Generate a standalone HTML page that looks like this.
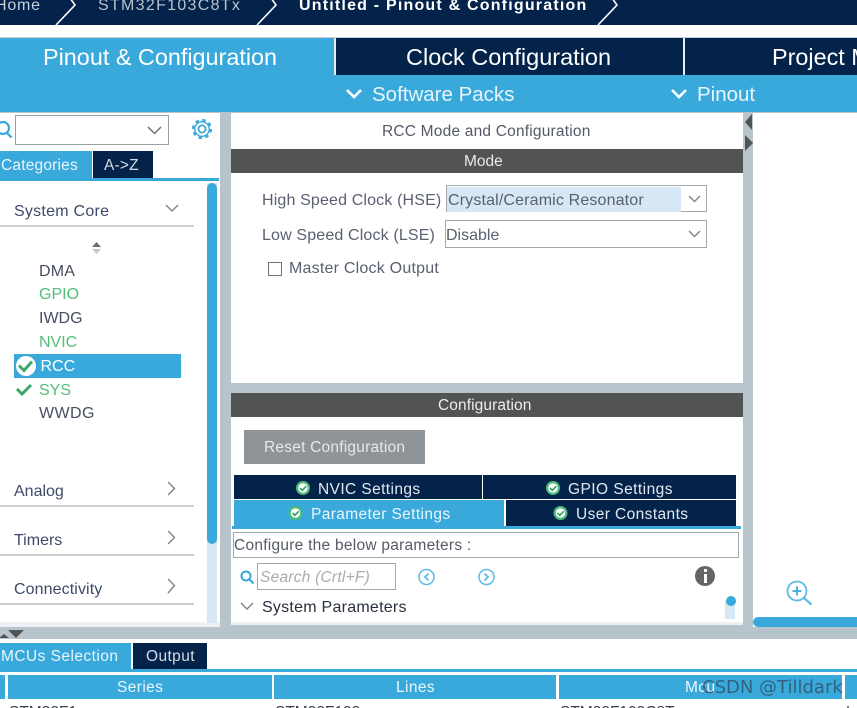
<!DOCTYPE html>
<html><head><meta charset="utf-8"><style>
html,body{margin:0;padding:0;background:#fff}
#p{position:relative;width:857px;height:708px;overflow:hidden;background:#fff;font-family:"Liberation Sans",sans-serif;filter:blur(.3px)}
.b{position:absolute}
.t{position:absolute;white-space:nowrap;line-height:1;margin-top:1px}
svg{position:absolute;overflow:visible}
</style></head><body><div id="p">
<!-- top bar -->
<div class="b" style="left:0;top:0;width:857px;height:25px;background:#03234b"></div>
<div class="t" style="left:-5px;top:-3px;font-size:16px;color:#c8d0da;letter-spacing:.8px">Home</div>
<div class="t" style="left:98px;top:-3px;font-size:16px;color:#b8c2ce;letter-spacing:1.3px">STM32F103C8Tx</div>
<div class="t" style="left:299px;top:-3px;font-size:16px;color:#fff;font-weight:bold;letter-spacing:1.2px">Untitled - Pinout &amp; Configuration</div>
<svg style="left:0;top:0" width="857" height="25" fill="none" stroke="#fff" stroke-width="1.6"><path d="M56 25L75 5 70 -2M257 25L276 5 271 -2M598 25L617 5 612 -2"/></svg>
<!-- main tabs -->
<div class="b" style="left:0;top:37px;width:857px;height:75px;background:#39a9dc"></div>
<div class="b" style="left:0;top:37px;width:857px;height:1px;background:#c5d2da"></div>
<div class="b" style="left:334px;top:38px;width:2px;height:37px;background:#e6edf2"></div>
<div class="b" style="left:336px;top:38px;width:347px;height:37px;background:#03234b"></div>
<div class="b" style="left:683px;top:38px;width:2px;height:37px;background:#e6edf2"></div>
<div class="b" style="left:685px;top:38px;width:172px;height:37px;background:#03234b"></div>
<div class="t" style="left:43px;top:45px;font-size:23.400px;color:#fff">Pinout &amp; Configuration</div>
<div class="t" style="left:406px;top:45px;font-size:23.500px;color:#fff">Clock Configuration</div>
<div class="t" style="left:772px;top:45px;font-size:23.400px;color:#fff">Project Manager</div>
<svg style="left:0;top:75px" width="857" height="37" fill="none" stroke="#fff" stroke-width="2.6"><path d="M347 15l7 7 7-7M672 15l7 7 7-7"/></svg>
<div class="t" style="left:372px;top:84px;font-size:20.5px;color:#e8f5fb">Software Packs</div>
<div class="t" style="left:697px;top:84px;font-size:20.5px;color:#e8f5fb">Pinout</div>
<!-- grey base -->
<div class="b" style="left:0;top:112px;width:857px;height:527px;background:#b8c4cc"></div>
<!-- left panel -->
<div class="b" style="left:0;top:113px;width:220px;height:514px;background:#fff"></div>
<div class="b" style="left:0;top:622px;width:220px;height:5px;background:#eef1f3"></div>
<svg style="left:0;top:118px" width="14" height="20" fill="none" stroke="#39a9dc" stroke-width="2.2"><circle cx="3" cy="10" r="6"/><path d="M7 15l4.500 4.500"/></svg>
<div class="b" style="left:15px;top:115px;width:152px;height:28px;border:1.500px solid #9a9fa3;background:#fff"></div>
<svg style="left:147px;top:126px" width="15" height="9" fill="none" stroke="#6d7479" stroke-width="1.500"><path d="M1 1l6.500 6.500L14 1"/></svg>
<svg style="left:191px;top:118px" width="22" height="22" viewBox="0 0 22 22" fill="none" stroke="#39a9dc"><circle cx="11" cy="11" r="8.800" stroke-width="2.600" stroke-dasharray="3.400 3.500"/><circle cx="11" cy="11" r="7.300" stroke-width="1.400"/><circle cx="11" cy="11" r="3.600" stroke-width="1.800"/></svg>
<div class="b" style="left:0;top:151px;width:91.500px;height:27px;background:#39a9dc"></div>
<div class="b" style="left:93px;top:151px;width:60px;height:27px;background:#03234b"></div>
<div class="b" style="left:0;top:178px;width:219px;height:3px;background:#39a9dc"></div>
<div class="t" style="left:1px;top:157px;font-size:15.500px;color:#eaf6fc;letter-spacing:.2px">Categories</div>
<div class="t" style="left:104px;top:157px;font-size:15.500px;color:#d5dce4;letter-spacing:.2px">A-&gt;Z</div>
<div class="b" style="left:207px;top:183px;width:10px;height:440px;background:#d7e7f4"></div>
<div class="b" style="left:207px;top:183px;width:10px;height:361px;background:#39a9dc;border-radius:5px"></div>
<div class="t" style="left:14px;top:203px;font-size:16px;color:#3d4a68;letter-spacing:.25px">System Core</div>
<svg style="left:165px;top:204px" width="14" height="9" fill="none" stroke="#7d8489" stroke-width="1.400"><path d="M1 1l6 6 6-6"/></svg>
<div class="b" style="left:0;top:225px;width:194px;height:1.500px;background:#c9cfd5"></div>
<svg style="left:91px;top:241px" width="11" height="14"><path d="M5.500 1L10 6H1z" fill="#6b6e70"/><path d="M1 8h9l-4.500 5z" fill="#c6c9cb"/></svg>
<div class="t" style="left:39px;top:263px;font-size:16px;color:#474e5f;letter-spacing:.2px">DMA</div>
<div class="t" style="left:39px;top:286px;font-size:16px;color:#52bd78">GPIO</div>
<div class="t" style="left:39px;top:310px;font-size:16px;color:#474e5f">IWDG</div>
<div class="t" style="left:39px;top:334px;font-size:16px;color:#52bd78">NVIC</div>
<div class="b" style="left:14px;top:354px;width:167px;height:24px;background:#39a9dc"></div>
<div class="b" style="left:15.500px;top:355.500px;width:20px;height:20px;border-radius:50%;background:#fff"></div>
<svg style="left:15px;top:355px" width="21" height="21" fill="none" stroke="#3aa76d" stroke-width="3"><path d="M4 10.500l5 5 8-9"/></svg>
<div class="t" style="left:40.500px;top:358px;font-size:16px;color:#fff">RCC</div>
<svg style="left:16px;top:382px" width="17" height="15" fill="none" stroke="#3aa76d" stroke-width="3"><path d="M1 7l5 5 9-9"/></svg>
<div class="t" style="left:39px;top:382px;font-size:16px;color:#52bd78">SYS</div>
<div class="t" style="left:39px;top:405px;font-size:16px;color:#474e5f;letter-spacing:.4px">WWDG</div>
<div class="t" style="left:14px;top:483px;font-size:16px;color:#3d4a68">Analog</div>
<div class="b" style="left:0;top:505px;width:194px;height:1.500px;background:#c9cfd5"></div>
<div class="t" style="left:14px;top:532px;font-size:16px;color:#3d4a68">Timers</div>
<div class="b" style="left:0;top:554px;width:194px;height:1.500px;background:#c9cfd5"></div>
<div class="t" style="left:14px;top:581px;font-size:16px;color:#3d4a68;letter-spacing:.1px">Connectivity</div>
<div class="b" style="left:0;top:603px;width:194px;height:1.500px;background:#c9cfd5"></div>
<svg style="left:167px;top:481px" width="10" height="120" fill="none" stroke="#7d8489" stroke-width="1.400"><path d="M1 1l6.500 6.500L1 14M1 50l6.500 6.500L1 63M1 98l6.500 6.500L1 112"/></svg>
<!-- center -->
<div class="b" style="left:231px;top:113px;width:512px;height:270px;background:#fff"></div>
<div class="t" style="left:382px;top:123px;font-size:15.500px;color:#555a66;letter-spacing:.2px">RCC Mode and Configuration</div>
<div class="b" style="left:231px;top:149px;width:512px;height:24px;background:#525453"></div>
<div class="t" style="left:464px;top:153px;font-size:15.500px;color:#e8eaea">Mode</div>
<div class="t" style="left:262px;top:192px;font-size:16px;color:#5a6070;letter-spacing:.15px">High Speed Clock (HSE)</div>
<div class="t" style="left:262px;top:227px;font-size:16px;color:#5a6070;letter-spacing:.15px">Low Speed Clock (LSE)</div>
<div class="b" style="left:445.500px;top:185px;width:259px;height:25px;border:1.500px solid #a4a9ad;background:#fff"></div>
<div class="b" style="left:447px;top:186.500px;width:234px;height:25px;background:#d7e7f6"></div>
<div class="t" style="left:448px;top:192px;font-size:16px;color:#5a6070;letter-spacing:.15px">Crystal/Ceramic Resonator</div>
<svg style="left:688px;top:195px" width="13" height="9" fill="none" stroke="#7d8489" stroke-width="1.400"><path d="M1 1l5.500 5.500L12 1"/></svg>
<div class="b" style="left:444.500px;top:220px;width:260px;height:26px;border:1.500px solid #a4a9ad;background:#fff"></div>
<div class="t" style="left:446px;top:227px;font-size:16px;color:#5a6070">Disable</div>
<svg style="left:688px;top:230px" width="13" height="9" fill="none" stroke="#7d8489" stroke-width="1.400"><path d="M1 1l5.500 5.500L12 1"/></svg>
<div class="b" style="left:268px;top:262px;width:12px;height:12px;border:1.500px solid #6f7376;background:#fff"></div>
<div class="t" style="left:289px;top:260px;font-size:16px;color:#5a6070;letter-spacing:.22px">Master Clock Output</div>
<!-- center lower -->
<div class="b" style="left:231px;top:393px;width:512px;height:232px;background:#fff"></div>
<div class="b" style="left:231px;top:393px;width:512px;height:24px;background:#525453"></div>
<div class="t" style="left:438px;top:397px;font-size:15.500px;color:#eceded;letter-spacing:.1px">Configuration</div>
<div class="b" style="left:244px;top:430px;width:181px;height:34px;background:#8e9498"></div>
<div class="t" style="left:264px;top:439px;font-size:15.500px;color:#e6e8e9;letter-spacing:.22px">Reset Configuration</div>
<div class="b" style="left:234px;top:475px;width:247.500px;height:24px;background:#03234b"></div>
<div class="b" style="left:483px;top:475px;width:252.500px;height:24px;background:#03234b"></div>
<div class="b" style="left:234px;top:500px;width:270px;height:28px;background:#39a9dc"></div>
<div class="b" style="left:506px;top:500px;width:229.500px;height:26px;background:#03234b"></div>
<div class="b" style="left:232px;top:526px;width:509px;height:3px;background:#39a9dc"></div>
<div class="t" style="left:318px;top:480.500px;font-size:15.500px;color:#e4e8ee;letter-spacing:.4px">NVIC Settings</div>
<div class="t" style="left:568px;top:480.500px;font-size:15.500px;color:#e4e8ee;letter-spacing:.45px">GPIO Settings</div>
<div class="t" style="left:311px;top:505.500px;font-size:15.500px;color:#eaf6fc;letter-spacing:.38px">Parameter Settings</div>
<div class="t" style="left:576px;top:505.500px;font-size:15.500px;color:#e4e8ee;letter-spacing:.4px">User Constants</div>
<svg style="left:0;top:0" width="857" height="708" fill="#fff" stroke="none">
<g><circle cx="303" cy="488" r="7" fill="#4cb97a"/><circle cx="303" cy="488" r="4.800"/><path d="M300 488l2.300 2.300 4-4" fill="none" stroke="#3aa76d" stroke-width="1.800"/></g>
<g><circle cx="553" cy="488" r="7" fill="#4cb97a"/><circle cx="553" cy="488" r="4.800"/><path d="M550 488l2.300 2.300 4-4" fill="none" stroke="#3aa76d" stroke-width="1.800"/></g>
<g><circle cx="295.500" cy="513" r="7" fill="#4cb97a"/><circle cx="295.500" cy="513" r="4.800"/><path d="M292.500 513l2.300 2.300 4-4" fill="none" stroke="#3aa76d" stroke-width="1.800"/></g>
<g><circle cx="560.500" cy="513" r="7" fill="#4cb97a"/><circle cx="560.500" cy="513" r="4.800"/><path d="M557.500 513l2.300 2.300 4-4" fill="none" stroke="#3aa76d" stroke-width="1.800"/></g>
</svg>
<div class="b" style="left:233px;top:532px;width:504px;height:24px;border:1.500px solid #a4a9ad;background:#fff"></div>
<div class="t" style="left:234px;top:537px;font-size:15.500px;color:#555a66;letter-spacing:.26px">Configure the below parameters :</div>
<svg style="left:240px;top:570px" width="15" height="15" fill="none" stroke="#39a9dc" stroke-width="2"><circle cx="6" cy="6" r="4.500"/><path d="M9.500 9.500l4 4"/></svg>
<div class="b" style="left:257px;top:563px;width:137px;height:25px;border:1.500px solid #a4a9ad;background:#fff"></div>
<div class="t" style="left:260px;top:569px;font-size:15.500px;color:#a8acaf;font-style:italic;letter-spacing:.24px">Search (Crtl+F)</div>
<svg style="left:418px;top:568px" width="78" height="18" fill="none" stroke="#5cbbe6" stroke-width="1.500"><circle cx="8.500" cy="9" r="7.500"/><path d="M10.500 5.500L7 9l3.500 3.500" stroke-width="1.800"/><circle cx="68.500" cy="9" r="7.500"/><path d="M66.500 5.500L70 9l-3.500 3.500" stroke-width="1.800"/></svg>
<div class="b" style="left:695px;top:566px;width:20px;height:20px;border-radius:50%;background:#636567"></div>
<div class="b" style="left:703.500px;top:569px;width:3px;height:3px;background:#fff"></div>
<div class="b" style="left:703.500px;top:573.500px;width:3px;height:9px;background:#fff"></div>
<svg style="left:240px;top:602px" width="15" height="10" fill="none" stroke="#7d8489" stroke-width="1.400"><path d="M1 1l6 6 6-6"/></svg>
<div class="t" style="left:262px;top:599px;font-size:16px;color:#28303c;letter-spacing:.25px">System Parameters</div>
<div class="b" style="left:725px;top:600px;width:10px;height:19px;background:#d7e7f4"></div>
<div class="b" style="left:725.500px;top:595.500px;width:10px;height:10px;border-radius:50%;background:#39a9dc"></div>
<div class="b" style="left:231px;top:622px;width:512px;height:3px;background:#eef1f3"></div>
<!-- splitter arrows -->
<svg style="left:744px;top:113px" width="10" height="40"><path d="M8 1v16L1 9z" fill="#525453"/><path d="M1 22v16l8-8z" fill="#525453"/></svg>
<!-- right panel -->
<div class="b" style="left:753px;top:113px;width:104px;height:514px;background:#fff"></div>
<svg style="left:786px;top:580px" width="27" height="26" fill="none" stroke="#5cbbe6" stroke-width="1.800"><circle cx="11" cy="11" r="9.500"/><path d="M6.500 11h9M11 6.500v9" stroke="#39a9dc" stroke-width="1.800"/><path d="M18 18l7.500 6.500" stroke-width="2.200"/></svg>
<div class="b" style="left:753px;top:617px;width:104px;height:10px;background:#39a9dc;border-radius:5px 0 0 5px"></div>
<svg style="left:0;top:628px" width="30" height="11"><path d="M-1 10l5-4 5 4z" fill="#525453"/><path d="M8 2h16l-8 8z" fill="#525453"/></svg>
<!-- bottom -->
<div class="b" style="left:0;top:639px;width:857px;height:69px;background:#fff"></div>
<div class="b" style="left:0;top:643px;width:131px;height:26px;background:#39a9dc"></div>
<div class="b" style="left:133px;top:643px;width:74px;height:26px;background:#03234b"></div>
<div class="b" style="left:0;top:669px;width:857px;height:3px;background:#39a9dc"></div>
<div class="t" style="left:1px;top:648px;font-size:15.500px;color:#eaf6fc;letter-spacing:.45px">MCUs Selection</div>
<div class="t" style="left:146px;top:648px;font-size:15.500px;color:#d5dce4;letter-spacing:.4px">Output</div>
<div class="b" style="left:0;top:675px;width:5px;height:24px;background:#39a9dc"></div>
<div class="b" style="left:8px;top:675px;width:264px;height:24px;background:#39a9dc"></div>
<div class="b" style="left:274px;top:675px;width:282px;height:24px;background:#39a9dc"></div>
<div class="b" style="left:559px;top:675px;width:283px;height:24px;background:#39a9dc"></div>
<div class="b" style="left:845px;top:675px;width:12px;height:24px;background:#39a9dc"></div>
<div class="t" style="left:117px;top:679px;font-size:15.500px;color:#eaf6fc;letter-spacing:.4px">Series</div>
<div class="t" style="left:396px;top:679px;font-size:15.500px;color:#eaf6fc;letter-spacing:.4px">Lines</div>
<div class="t" style="left:685px;top:679px;font-size:15.500px;color:#eaf6fc;letter-spacing:.4px">Mcu</div>
<div class="t" style="left:702px;top:678px;font-size:18px;font-family:'DejaVu Sans',sans-serif;color:rgba(50,70,90,.72)">CSDN @Tilldark</div>
<div class="t" style="left:9px;top:704px;font-size:15.500px;color:#3a3f48">STM32F1</div>
<div class="t" style="left:275px;top:704px;font-size:15.500px;color:#3a3f48">STM32F103</div>
<div class="t" style="left:560px;top:704px;font-size:15.500px;color:#3a3f48">STM32F103C8Tx</div>
<div class="t" style="left:846px;top:704px;font-size:15.500px;color:#3a3f48">L</div>
</div></body></html>
